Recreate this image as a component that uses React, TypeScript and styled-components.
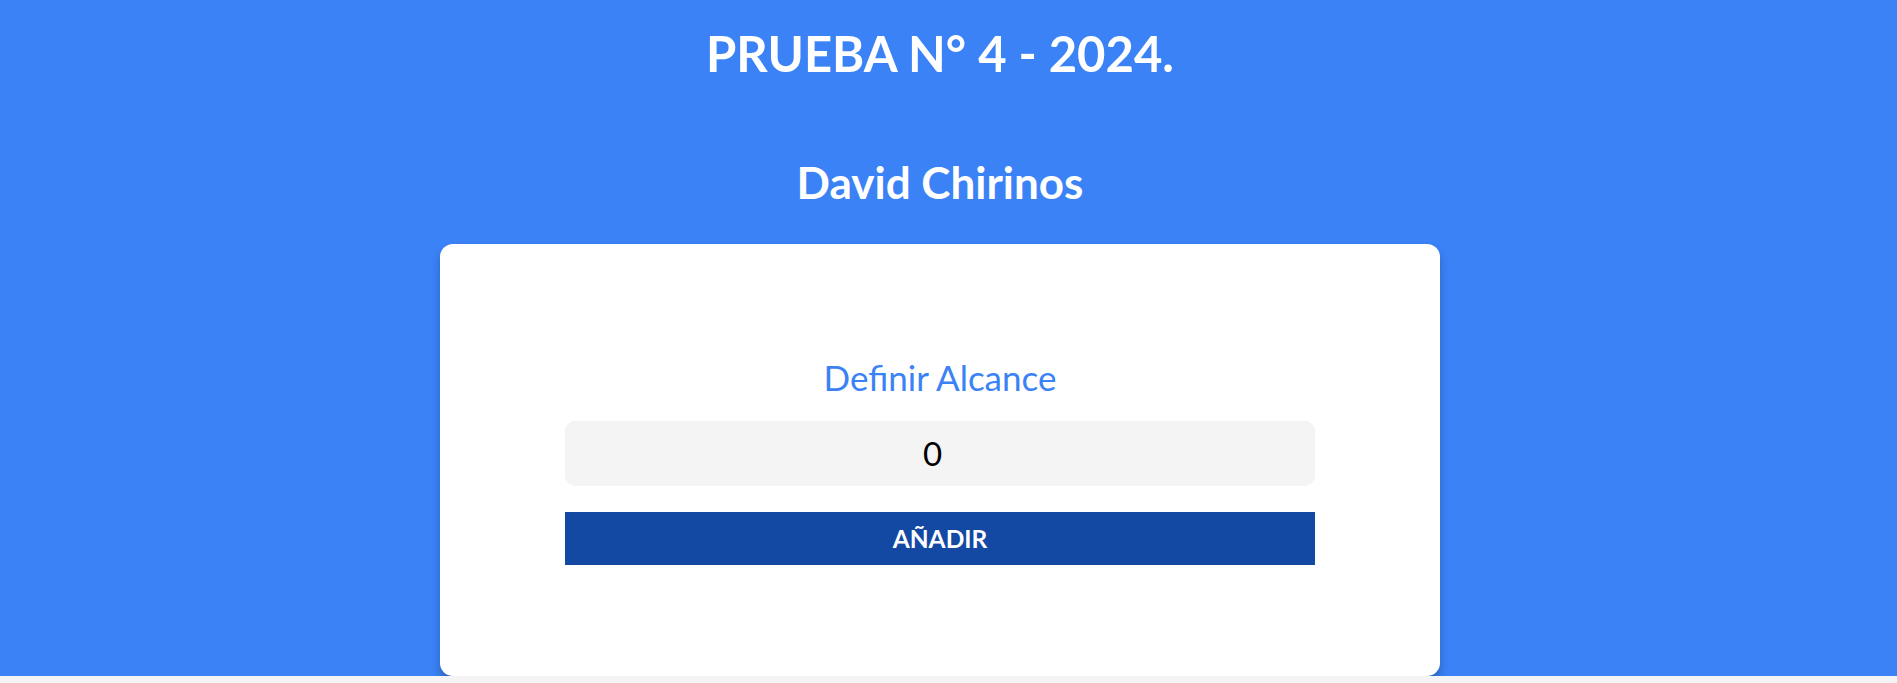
import React from "react";
import styled, { createGlobalStyle } from "styled-components";

const Global = createGlobalStyle`
  html, body {
    margin: 0;
    padding: 0;
    background: #f4f4f4;
    font-family: Lato, "Open Sans", sans-serif;
  }
  input[type="number"]::-webkit-inner-spin-button {
    opacity: 0;
  }
`;

const Hero = styled.section`
  background: #3b82f6;
  display: flex;
  flex-direction: column;
  align-items: center;
  padding: 24px 17px 0 0;
`;

const Title = styled.h1`
  margin: 0;
  color: #ffffff;
  font-size: 49px;
  font-weight: 700;
  line-height: 1.2;
`;

const Author = styled.h2`
  margin: 73px 0 0;
  color: #ffffff;
  font-size: 44px;
  font-weight: 700;
  line-height: 1.2;
`;

const Card = styled.div`
  margin-top: 35px;
  width: 1000px;
  height: 432px;
  box-sizing: border-box;
  background: #ffffff;
  border-radius: 13px;
  box-shadow: 0 6px 9px rgba(0, 0, 0, 0.25);
  display: flex;
  flex-direction: column;
  align-items: center;
  padding-top: 112px;
`;

const Label = styled.label`
  color: #3b82f6;
  font-size: 35px;
  line-height: 1.2;
`;

const Input = styled.input`
  margin-top: 23px;
  width: 750px;
  height: 65px;
  box-sizing: border-box;
  border: none;
  outline: none;
  border-radius: 10px;
  background: #f4f4f4;
  text-align: center;
  font-family: Lato, sans-serif;
  font-size: 33px;
  color: #000;
`;

const Button = styled.button`
  margin-top: 26px;
  width: 750px;
  height: 53px;
  border: none;
  background: #1348a3;
  color: #ffffff;
  font-family: Lato, sans-serif;
  font-weight: 700;
  font-size: 24.5px;
  text-transform: uppercase;
  cursor: pointer;
`;

export default function App() {
  return (
    <>
      <Global />
      <Hero>
        <Title>PRUEBA N° 4 - 2024.</Title>
        <Author>David Chirinos</Author>
        <Card>
          <Label htmlFor="alcance">Definir Alcance</Label>
          <Input id="alcance" type="number" defaultValue="0" />
          <Button>Añadir</Button>
        </Card>
      </Hero>
    </>
  );
}
